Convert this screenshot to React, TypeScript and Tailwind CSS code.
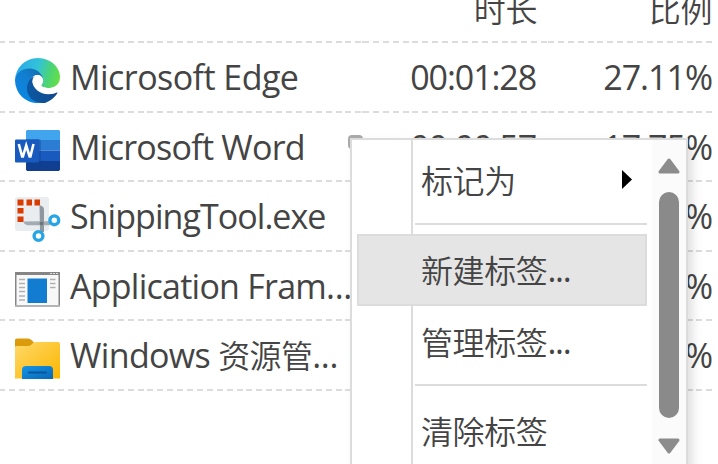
import React from "react";

const latin = "font-['Open_Sans','Noto_Sans_CJK_SC',sans-serif]";
const cjk = "font-['Noto_Sans_CJK_SC',sans-serif] font-[350]";

function EdgeIcon() {
  return (
    <svg width="45" height="45" viewBox="0 0 256 256" className="block">
      <defs>
        <linearGradient id="eBase" x1="60" y1="177" x2="241" y2="177" gradientUnits="userSpaceOnUse">
          <stop stopColor="#0c59a4" />
          <stop offset="1" stopColor="#114a8b" />
        </linearGradient>
        <linearGradient id="eBlue" x1="150" y1="100" x2="40" y2="220" gradientUnits="userSpaceOnUse">
          <stop stopColor="#1272b8" />
          <stop offset=".4" stopColor="#127fd2" />
          <stop offset="1" stopColor="#0a86e0" />
        </linearGradient>
        <linearGradient id="eTop" x1="10" y1="60" x2="250" y2="130" gradientUnits="userSpaceOnUse">
          <stop stopColor="#2aa9ea" />
          <stop offset=".45" stopColor="#33c3d8" />
          <stop offset=".75" stopColor="#4bd476" />
          <stop offset="1" stopColor="#66e043" />
        </linearGradient>
      </defs>
      <path fill="url(#eBase)" d="M235.7 195.5a93.700 93.700 0 0 1-10.600 4.700 101.900 101.900 0 0 1-35.900 6.400c-47.300 0-88.500-32.500-88.500-74.300a31.500 31.500 0 0 1 16.400-27.300c-42.800 1.800-53.800 46.400-53.800 72.500 0 73.900 68.100 81.400 82.800 81.400 7.900 0 19.800-2.300 27-4.600l1.300-.4a128.300 128.300 0 0 0 66.600-52.800 4 4 0 0 0-5.300-5.600Z" />
      <path fill="url(#eBlue)" d="M105.700 241.400a79.200 79.200 0 0 1-22.700-21.300 80.700 80.700 0 0 1 29.500-120c3.200-1.500 8.500-4.100 15.600-4a32.400 32.400 0 0 1 25.700 13 31.900 31.900 0 0 1 6.300 18.700c0-.2 24.500-79.600-80-79.600C36.200 48.200.1 89.900.1 126.500A130.200 130.200 0 0 0 12.200 182.500a128 128 0 0 0 156.400 67 75.500 75.500 0 0 1-62.800-8Z" />
      <path fill="url(#eTop)" d="M152.300 148.900c-.9 1-3.400 2.500-3.400 5.600 0 2.600 1.700 5.200 4.800 7.300 14.400 10.100 41.700 8.700 41.800 8.700A59.900 59.900 0 0 0 226 162a61.900 61.900 0 0 0 30-53.200c.3-22.400-8-37.300-11.300-43.900C223.400 23.300 177.700 0 128 0A128 128 0 0 0 0 126.200c.5-36.500 36.800-66 80-66 3.500 0 23.500.3 42 10a72.600 72.600 0 0 1 30.900 29.300c6.100 10.600 7.200 24.100 7.200 29.500 0 5.300-2.700 13.300-7.800 19.900Z" />
      <path fill="#fff" d="M99 136C99 112 112 97 129 97c18 0 31 14 31 32 0 14-11 19-11 26 0 9 21 16 46 16 12 0 22-3 30-8l20 18-5 14c-40 17-88 8-116-19-17-16-25-28-25-40Z" />
    </svg>
  );
}

function WordIcon() {
  return (
    <svg width="46" height="42" viewBox="0 0 46 42" className="block">
      <path fill="#41a5ee" d="M12 0h32l1 1V10H11V1z" />
      <path fill="#2b7cd3" d="M11 10h34v10.500H11z" />
      <path fill="#185abd" d="M11 20.500h34V31H11z" />
      <path fill="#103f91" d="M11 31h34v8.500L44 41H12l-1-1.500z" />
      <path fill="#123f89" opacity=".4" d="M11 9h13q1.800 0 1.800 2v21q0 2.500-1.800 2.500H11z" />
      <rect y="9.500" width="24" height="23" rx="1" fill="#185abd" />
      <path d="m3.800 14 3.300 12.500h.8L11.200 15.500l3.400 11h.8L18.500 14" fill="none" stroke="#fff" strokeWidth="2.600" />
    </svg>
  );
}

function SnipIcon() {
  return (
    <svg width="46" height="46" viewBox="0 0 46 46" className="block">
      <rect width="34" height="34" rx="3" fill="#e9edf0" />
      <path fill="#da3b01" d="M2.500 2.500h6V8.500h-6zM11.500 2.500h5.500V8.500h-5.500zM19.500 2.500H25V8.500h-5.500zM2.500 11h6v5.500h-6zM2.500 19.500h6V25h-6z" />
      <path d="m8 24.500 17-.2h10v4H13q-3 0-5-3.800z" fill="#a4acb3" />
      <path d="m24.500 8 3 1.500q1.500 1 1.500 3V35h-4z" fill="#8e979e" />
      <circle cx="26.500" cy="26.500" r="1.800" fill="#68727a" />
      <circle cx="39.300" cy="23.300" r="4.400" fill="#fff" stroke="#27a5e5" strokeWidth="3.400" />
      <circle cx="23.500" cy="39" r="4.400" fill="#fff" stroke="#27a5e5" strokeWidth="3.400" />
    </svg>
  );
}

function FrameIcon() {
  return (
    <svg width="46" height="36" viewBox="0 0 46 36" className="block">
      <rect x=".75" y=".75" width="43.500" height="33" fill="#f8f8f8" stroke="#858585" strokeWidth="1.500" />
      <path d="M0 0h45v3H0z" fill="#858585" />
      <path d="M0 33h45v2H0z" fill="#b4b4b4" />
      <path d="M35 1.500h8" stroke="#e0e0e0" strokeDasharray="2 1" />
      <rect x="12.500" y="6.500" width="19.500" height="24.500" fill="#127cd0" />
      <path d="M4 7.500h6M4 11.500h6M4 15.500h6M4 19.500h6M4 24h6M4 28h6M35 7.500h5.500M35 11.500h5.500M35 15.500h5.500" stroke="#b0b0b0" strokeWidth="1.500" />
    </svg>
  );
}

function FolderIcon() {
  return (
    <svg width="46" height="42" viewBox="0 0 46 42" className="block">
      <defs>
        <linearGradient id="fold" x1="0" y1="0" x2="1" y2="1">
          <stop stopColor="#ffd96a" />
          <stop offset="1" stopColor="#fbb600" />
        </linearGradient>
        <linearGradient id="tray" x1="0" y1="0" x2="1" y2="1">
          <stop stopColor="#1595e5" />
          <stop offset="1" stopColor="#0867b7" />
        </linearGradient>
      </defs>
      <path d="M0 2Q0 .5 2 .5h11q2 0 3.500 1.500L19 4.500V15H0z" fill="#dc9b0b" />
      <path d="M0 9q0-1 2-1h11q2 0 3.500-1.500l1-1Q19 4 21 4h22q2 0 2 2v34.500H0z" fill="url(#fold)" />
      <path d="M7 41V32q0-4 4-4h23q4 0 4 4v9z" fill="url(#tray)" />
      <path d="M14 34.500h17" stroke="#0b559c" strokeWidth="2" strokeLinecap="round" />
    </svg>
  );
}

function Dash({ className }: { className: string }) {
  return (
    <div
      className={`h-[2px] bg-[repeating-linear-gradient(90deg,#dcdcdc_0_6px,transparent_6px_9.900px)] ${className}`}
    />
  );
}

function Divider() {
  return (
    <div className="flex h-[2px] w-[714px]">
      <Dash className="w-[363px] bg-[position:-1px_0]" />
      <Dash className="w-[185px]" />
      <Dash className="w-[166px]" />
    </div>
  );
}

const rows = [
  { icon: <EdgeIcon />, pad: "pt-[15px]", h: "h-[68px]", name: "Microsoft Edge", ls: "tracking-[-0.55px]", time: "00:01:28", pct: "27.11%" },
  { icon: <WordIcon />, pad: "pt-[17px]", h: "h-[67px]", name: "Microsoft Word", ls: "tracking-[-0.75px]", time: "00:00:57", pct: "17.75%" },
  { icon: <SnipIcon />, pad: "pt-[15px]", h: "h-[68px]", name: "SnippingTool.exe", ls: "tracking-[-0.95px]", time: "00:00:52", pct: "16.02%" },
  { icon: <FrameIcon />, pad: "pt-[20px]", h: "h-[67px]", name: "Application Fram", cut: true, ls: "tracking-[-0.75px]", time: "00:00:41", pct: "12.63%" },
  { icon: <FolderIcon />, pad: "pt-[17px]", h: "h-[68px]", name: "Windows ", zh: "资源管", cut: true, ls: "tracking-[-0.65px]", time: "00:00:35", pct: "10.78%" },
];

function MenuItem({ label, dots, className }: { label: string; dots?: boolean; className: string }) {
  return (
    <div className={`flex w-[290px] shrink-0 items-center pl-[64px] ${className}`}>
      <span className={`${cjk} text-[32px] leading-[44px] tracking-[-0.4px]`}>{label}</span>
      {dots && <span className="text-[34px] leading-[44px] tracking-[-1.300px]">...</span>}
    </div>
  );
}

function ContextMenu() {
  return (
    <div className="absolute left-[350px] top-[138px] flex h-[340px] w-[338px] border-2 border-[#dcdcdc] bg-white shadow-[5px_5px_9px_rgba(0,0,0,0.12)]">
      <div className="absolute left-[59px] top-0 h-full w-[2px] bg-[#dcdcdc]" />
      <div className="relative flex w-[300px] flex-col pl-[5px]">
        <MenuItem label="标记为" className="h-[83px] pb-[5px]" />
        <svg width="10" height="20" viewBox="0 0 10 20" className="absolute left-[270px] top-[30px]">
          <path d="M0 0 10 9.500 0 19z" fill="#000" />
        </svg>
        <div className="ml-[58px] h-[2px] w-[232px] shrink-0 bg-[#dcdcdc]" />
        <MenuItem label="新建标签" dots className="mt-[9px] h-[72px] border-2 border-[#dcdcdc] bg-[#e5e5e5] !pl-[62px] pb-[2px]" />
        <MenuItem label="管理标签" dots className="h-[72px] pb-[2px]" />
        <div className="ml-[58px] mt-[6px] h-[2px] w-[232px] shrink-0 bg-[#dcdcdc]" />
        <MenuItem label="清除标签" className="mt-[10px] h-[72px] pb-[4px]" />
      </div>
      <div className="flex w-[34px] flex-col items-center bg-[#fbfbfb] pt-[18px]">
        <svg width="22" height="16" viewBox="0 0 22 16">
          <path d="M11 2 2 14h18z" fill="#8c8c8c" stroke="#8c8c8c" strokeWidth="3" strokeLinejoin="round" />
        </svg>
        <div className="mt-[18px] h-[226px] w-[20px] rounded-full bg-[#8a8a8a]" />
        <svg width="22" height="16" viewBox="0 0 22 16" className="mt-[20px]">
          <path d="M11 14 2 2h18z" fill="#8c8c8c" stroke="#8c8c8c" strokeWidth="3" strokeLinejoin="round" />
        </svg>
      </div>
    </div>
  );
}

export default function App() {
  return (
    <div className={`relative h-[464px] w-[718px] overflow-hidden bg-white text-[#444] ${latin}`}>
      <div className={`flex h-[41px] w-[712px] items-end justify-end ${cjk} text-[32px] leading-[44px] tracking-[-0.4px]`}>
        <div className="mb-[11px] w-[175px] text-right">时长</div>
        <div className="mb-[11px] w-[175px] text-right">比例</div>
      </div>
      <Divider />
      {rows.map((r) => (
        <div key={r.name}>
          <div className={`flex w-[714px] items-start ${r.h}`}>
            <div className={`w-[70px] shrink-0 pl-[15px] ${r.pad}`}>{r.icon}</div>
            <div className={`w-[293px] shrink-0 whitespace-pre pt-[11px] text-[34px] leading-[46px] ${r.ls}`}>
              {r.name}
              {r.zh && <span className={`${cjk} text-[32px] leading-[44px]`}>{r.zh}</span>}
              {r.cut && <span className="tracking-[-0.4px]">...</span>}
            </div>
            <div className="w-[173px] shrink-0 pt-[11px] text-right text-[34px] leading-[46px] tracking-[-1.1px]">{r.time}</div>
            <div className="w-[176px] shrink-0 pt-[11px] text-right text-[34px] leading-[46px] tracking-[-1px]">{r.pct}</div>
          </div>
          <Divider />
        </div>
      ))}
      <div className="absolute left-[348px] top-[135px] h-[14px] w-[15px] rounded-[4px] border-[4px] border-[#aaa]" />
      <ContextMenu />
    </div>
  );
}
